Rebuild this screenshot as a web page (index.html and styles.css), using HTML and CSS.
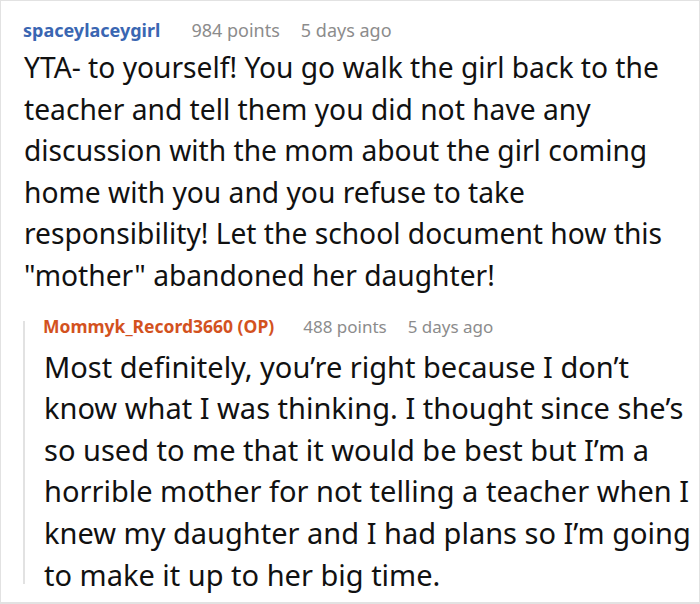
FILE: index.html
```html
<!DOCTYPE html>
<html>
<head>
<meta charset="utf-8">
<link rel="stylesheet" href="styles.css">
</head>
<body>
<div class="frame">
  <div class="comment">
    <div class="meta">
      <span class="author">spaceylaceygirl</span>
      <span class="info">984 points</span>
      <span class="info">5 days ago</span>
    </div>
    <p class="text">YTA- to yourself! You go walk the girl back to the teacher and tell them you did not have any discussion with the mom about the girl coming home with you and you refuse to take responsibility! Let the school document how this "mother" abandoned her daughter!</p>
    <div class="reply">
      <div class="meta">
        <span class="author op">Mommyk_Record3660 (OP)</span>
        <span class="info">488 points</span>
        <span class="info">5 days ago</span>
      </div>
      <p class="text">Most definitely, you’re right because I don’t know what I was thinking. I thought since she’s so used to me that it would be best but I’m a horrible mother for not telling a teacher when I knew my daughter and I had plans so I’m going to make it up to her big time.</p>
    </div>
  </div>
</div>
</body>
</html>
```
FILE: styles.css
```css
html, body {
  margin: 0;
  padding: 0;
  background: #fff;
}
body {
  font-family: "Noto Sans", "Open Sans", sans-serif;
  color: #111;
}
.frame {
  width: 700px;
  height: 604px;
  box-sizing: border-box;
  border: 1px solid #e2e2e2;
  border-bottom-width: 2px;
  overflow: hidden;
}
.comment {
  padding: 12px 0 0 22px;
}
.meta {
  display: flex;
  gap: 21px;
  align-items: baseline;
  font-size: 18px;
  line-height: 34px;
}
.author {
  font-weight: 700;
  color: #3a66b2;
  margin-right: 10px;
}
.author.op {
  color: #d3521e;
  margin-right: 8px;
}
.info {
  color: #8c8c8c;
}
.text {
  margin: 0;
  font-size: 28.2px;
  line-height: 41.6px;
  padding-left: 1px;
}
.reply {
  margin-top: 14px;
  padding-left: 20px;
  background: linear-gradient(#e2e2e2, #e2e2e2) no-repeat 0 10px / 2px calc(100% - 21px);
}
.reply .meta {
  font-size: 17.5px;
  line-height: 30px;
}
.reply .info {
  font-size: 17px;
}
.reply .text {
  margin-top: 4px;
  font-size: 29px;
}
```
